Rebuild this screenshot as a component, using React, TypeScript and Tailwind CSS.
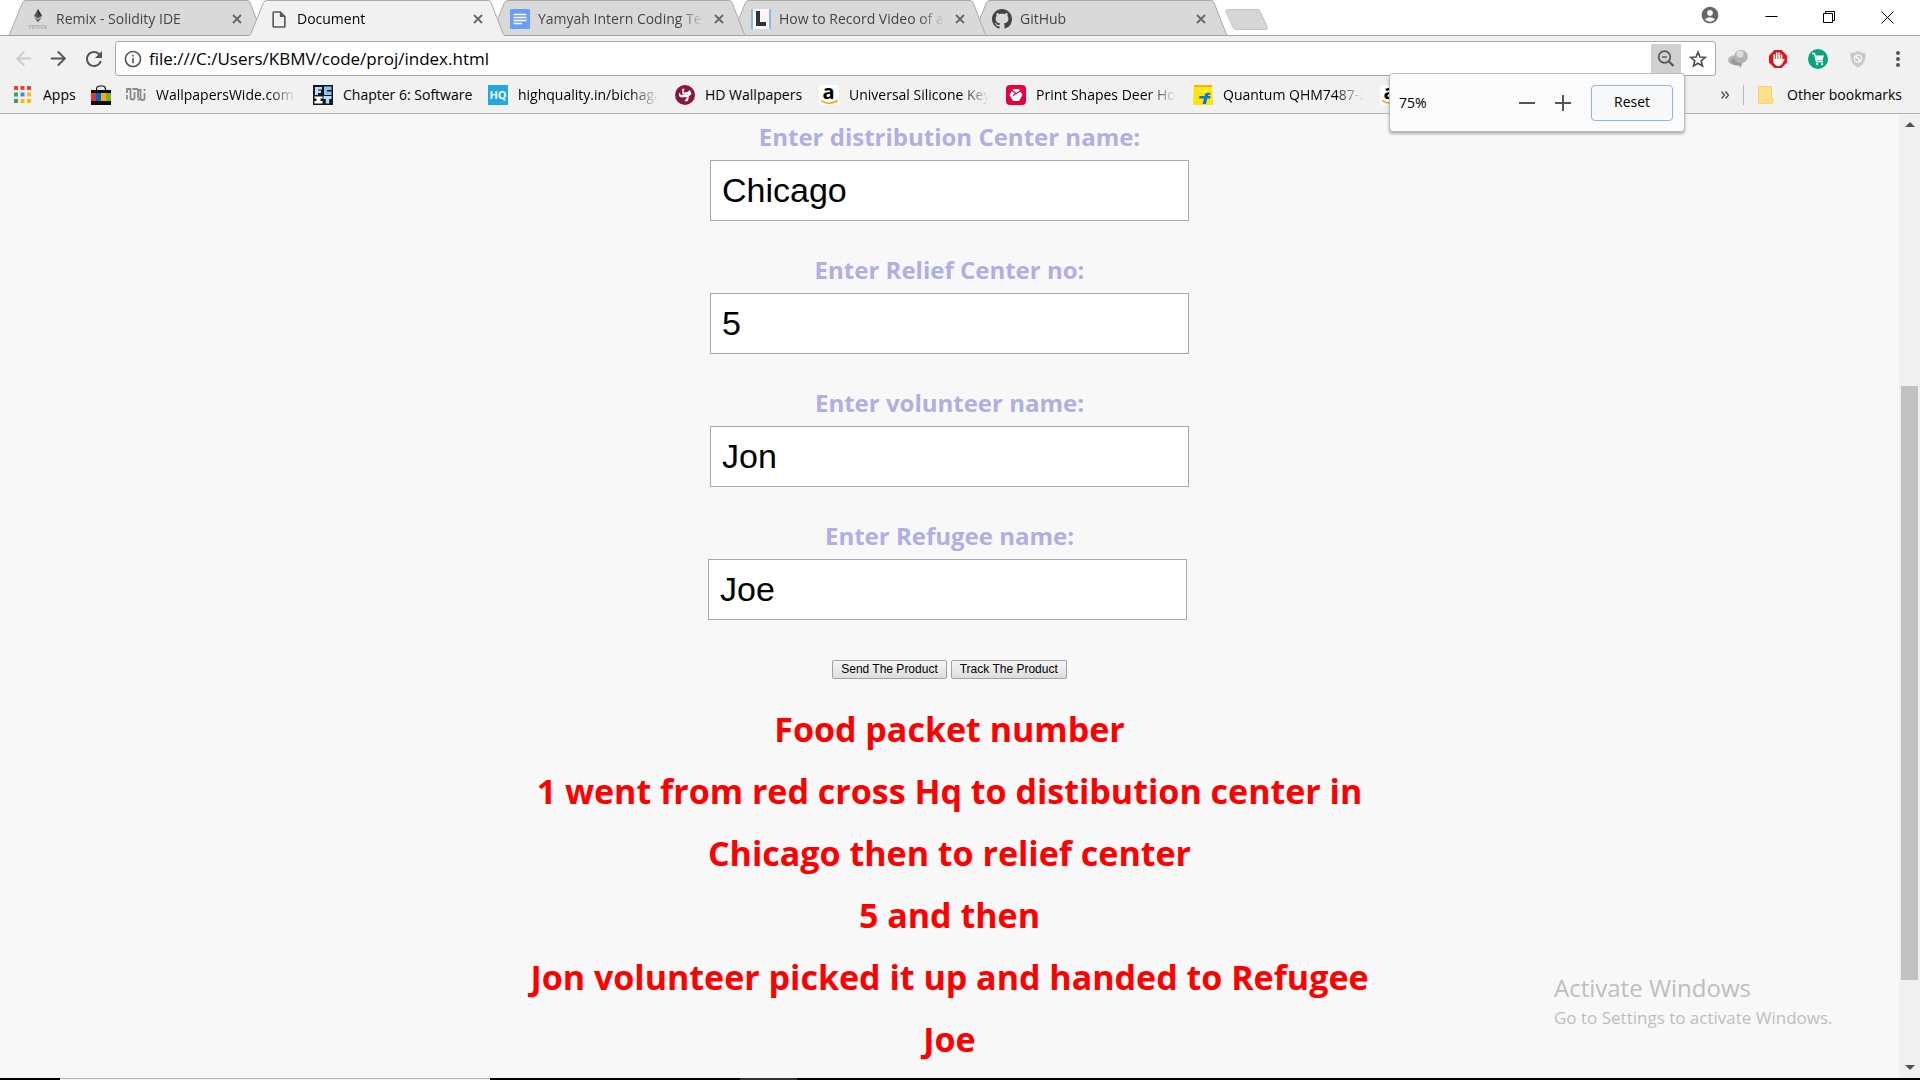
import React, { type ReactNode } from "react";
import {
  MdAccountCircle,
  MdArrowBack,
  MdArrowForward,
  MdInfoOutline,
  MdOutlineInsertDriveFile,
  MdRefresh,
} from "react-icons/md";

/* ---------- favicons ---------- */

const GithubMark = () => (
  <svg viewBox="0 0 16 16" className="size-5" fill="#444">
    <path d="M8 0C3.58 0 0 3.58 0 8c0 3.54 2.29 6.53 5.47 7.59.4.07.55-.17.55-.38 0-.19-.01-.82-.01-1.49-2.01.37-2.53-.49-2.69-.94-.09-.23-.48-.94-.82-1.13-.28-.15-.68-.52-.01-.53.63-.01 1.08.58 1.23.82.72 1.21 1.87.87 2.33.66.07-.52.28-.87.51-1.07-1.78-.2-3.64-.89-3.64-3.95 0-.87.31-1.59.82-2.15-.08-.2-.36-1.02.08-2.12 0 0 .67-.21 2.2.82.64-.18 1.32-.27 2-.27.68 0 1.36.09 2 .27 1.53-1.04 2.2-.82 2.2-.82.44 1.1.16 1.92.08 2.12.51.56.82 1.27.82 2.15 0 3.07-1.87 3.75-3.65 3.95.29.25.54.73.54 1.48 0 1.07-.01 1.93-.01 2.2 0 .21.15.46.55.38A8.013 8.013 0 0016 8c0-4.42-3.58-8-8-8z" />
  </svg>
);

const Remix = () => (
  <svg viewBox="0 0 20 22" className="h-[22px] w-5">
    <path d="M10 1 L14 8 L10 10.500 L6 8Z" fill="#555" />
    <path d="M10 1 L14 8 L10 6.500Z" fill="#333" />
    <path d="M6 9 L10 11.500 L14 9 L10 14.500Z" fill="#666" />
    <text x="10" y="20.500" fontSize="7" textAnchor="middle" fill="#999" fontFamily="Open Sans">
      remix
    </text>
  </svg>
);

const Docs = () => (
  <svg viewBox="0 0 20 20" className="size-5">
    <rect width="20" height="20" rx="1.500" fill="#6b9df8" />
    <path d="M3.500 5.500h13M3.500 8.500h13M3.500 11.500h13M3.500 14.500h8.500" stroke="#fff" strokeWidth="1.400" />
  </svg>
);

const LetterL = () => (
  <svg viewBox="0 0 20 20" className="size-5">
    <rect width="20" height="20" fill="#f8f8f8" />
    <path d="M1 0v20M19 0v20" stroke="#8ab6f2" strokeWidth="2" />
    <path d="M5 2h4v11h6v4H5z" fill="#333" />
  </svg>
);

const AppsGrid = () => (
  <svg viewBox="0 0 17 17" className="size-[17px]">
    {["#ea4335", "#ea4335", "#ea4335", "#34a853", "#4285f4", "#fbbc05", "#34a853", "#fbbc05", "#fbbc05"].map((c, i) => (
      <rect key={i} x={(i % 3) * 6.5} y={Math.floor(i / 3) * 6.5} width="4" height="4" fill={c} />
    ))}
  </svg>
);

const Bag = () => (
  <svg viewBox="0 0 20 20" className="size-5">
    <path d="M5.500 6V4a3 3 0 0 1 3-3h3a3 3 0 0 1 3 3v2" fill="none" stroke="#111" strokeWidth="1.200" />
    <rect y="5" width="20" height="15" fill="#0a0a0a" />
    <rect y="8" width="5" height="8" fill="#e53238" />
    <rect x="5" y="8" width="5" height="8" fill="#0064d2" />
    <rect x="10" y="8" width="5" height="8" fill="#f5af02" />
    <rect x="15" y="8" width="5" height="8" fill="#7cb518" />
  </svg>
);

const Wide = () => (
  <svg viewBox="0 0 20 20" className="size-5" fill="none" stroke="#8a8a8a" strokeWidth="1.800">
    <path d="M1 8V4h3.500v8.500a2 2 0 0 0 4 0V8M1 10v4.500M6.500 4h4a1.500 1.500 0 0 1 1.500 1.500V13M8.500 8.500V7M11.500 14.500h1a2 2 0 0 0 2-2V5h-2M14.500 13.500c0 1 1 1.500 2 1.500s2-.6 2-1.600V8M18.500 4v2" />
  </svg>
);

const Ecit = () => (
  <svg viewBox="0 0 20 20" className="size-5">
    <rect width="20" height="20" fill="#14181f" />
    <path d="M2 2h7v2.500H5v1h3V8H5v2H2z" fill="#b6dcf8" />
    <path d="M11 1.500h7.500V5H14v1.500h4.500V10H11z" fill="#8ec1ee" />
    <path d="M1.500 11.500h8v2h-2v2.500h2v2.500h-8V16h2v-2.500h-2z" fill="#fff" />
    <path d="M10.500 11h8v3h-2.300v4.500h-3.400V14h-2.300z" fill="#b6dcf8" />
  </svg>
);

const Hq = () => (
  <svg viewBox="0 0 20 20" className="size-5">
    <rect width="20" height="20" fill="#22a7e0" />
    <text x="10" y="14" fontSize="11" fontWeight="700" textAnchor="middle" fill="#fff" fontFamily="Open Sans">
      HQ
    </text>
  </svg>
);

const Hd = () => (
  <svg viewBox="0 0 20 20" className="size-5">
    <circle cx="10" cy="10" r="10" fill="#8e1537" />
    <path d="M4 7.500 L6.500 10.300 L11 9 L14 10.500 L13 16 L9.500 16.500 L12 12 L6 12.500 L4 11Z" fill="#fff" />
    <path d="M7 4 L9.500 3.500 L8.500 7.500 L12.500 7 L15 5 L16.500 9 L14.500 11 L12 9.200 L7.500 9.500Z" fill="#fff" />
  </svg>
);

const Amazon = () => (
  <svg viewBox="0 0 20 20" className="size-5">
    <rect width="20" height="20" rx="3" fill="#fff" />
    <text x="9.500" y="13.500" fontSize="20" fontWeight="700" textAnchor="middle" fill="#000" fontFamily="Open Sans">
      a
    </text>
    <path d="M2 15.500c4.500 3.500 10.500 3.500 15 .6M17.800 14.800l-.2 2.700" fill="none" stroke="#f90" strokeWidth="1.500" />
  </svg>
);

const Shapes = () => (
  <svg viewBox="0 0 20 20" className="size-5">
    <rect width="20" height="20" rx="4" fill="#e6003e" />
    <path d="M7 4h6l3.500 6-3.500 6H7l-3.500-6z" fill="#fff" />
    <path d="M5 4.500 L10 8.500 L15.500 5.500 M10 8.500 L7 10.500" fill="none" stroke="#e6003e" strokeWidth="1.200" />
  </svg>
);

const Flipkart = () => (
  <svg viewBox="0 0 20 20" className="size-5">
    <path d="M1 0h18l1 20H0z" fill="#fde50a" />
    <path d="M1 0h18v2H1z" fill="#e9b70c" />
    <path d="M6 3c0 5 8 5 8 0" fill="none" stroke="#fff59a" strokeWidth="1.200" />
    <path d="M17.500 8c-4-1-5.500 0-6 3H6.500l-.5 2.500h5L9.500 19h3.500l1.300-5.500H17l.5-2.500h-2.600c.3-1.200 1-1.400 2.500-1z" fill="#1174dc" />
  </svg>
);

/* ---------- extension icons ---------- */

const Balloons = () => (
  <svg viewBox="0 0 20 20" className="size-5">
    <path d="M9 15l5 0-1 4z" fill="#aaa" />
    <ellipse cx="6" cy="11" rx="6" ry="4.500" fill="#b5b5b5" />
    <ellipse cx="9" cy="12.500" rx="6" ry="4" fill="#999" />
    <circle cx="13" cy="7.500" r="6.800" fill="#b4b4b4" />
    <circle cx="12" cy="5" r="3.500" fill="#dedede" />
  </svg>
);

const StopHand = () => (
  <svg viewBox="0 0 20 20" className="size-5">
    <path d="M6.500 1h7L19 6.500v7L13.500 19h-7L1 13.500v-7z" fill="#e2131a" />
    <path d="M6.300 6v5M8.700 4V11M11.200 4v7M13.500 6v6" stroke="#fff" strokeWidth="1.700" strokeLinecap="round" />
    <path d="M5.500 10h8.900v1l1.500-1.500.8.800-3 5.200-2 1.500H8.500L5.500 14z" fill="#fff" />
  </svg>
);

const CartBadge = () => (
  <svg viewBox="0 0 20 20" className="size-5">
    <circle cx="10" cy="10" r="10" fill="#08a57c" />
    <path d="M4 4.500h2.500l2 8h6.500" fill="none" stroke="#fff" strokeWidth="1.300" />
    <path d="M7 6.500h9l-1.500 4.800H8.200z" fill="#fff" />
    <circle cx="9" cy="15" r="1.200" fill="#fff" />
    <circle cx="14" cy="15" r="1.200" fill="#fff" />
  </svg>
);

const Shield = () => (
  <svg viewBox="0 0 20 20" className="size-5">
    <path d="M10 2c2.500 1.500 4.500 2 7.500 2 0 7-1 11-7.500 14.500C3.500 15 2.500 11 2.500 4c3 0 5-.5 7.500-2z" fill="#c9c9c9" stroke="#dcdcdc" />
    <circle cx="10" cy="9.500" r="3.600" fill="none" stroke="#fff" strokeWidth="1.200" />
    <path d="M7.500 7l5 5" stroke="#fff" strokeWidth="1.200" />
  </svg>
);

const Cross = () => (
  <svg viewBox="0 0 10 10" className="size-2.5">
    <path d="M1 1l8 8M9 1l-8 8" stroke="currentColor" strokeWidth="1.800" />
  </svg>
);

const Magnifier = () => (
  <svg viewBox="0 0 18 18" className="size-[18px]" fill="none" stroke="#555">
    <circle cx="7.500" cy="7" r="5.800" strokeWidth="1.700" />
    <path d="M5 7h5" strokeWidth="1.400" />
    <path d="M11.500 11l5 5" strokeWidth="2.200" />
  </svg>
);

const Star = () => (
  <svg viewBox="0 0 18 18" className="size-[18px]" fill="none" stroke="#505050" strokeWidth="1.700">
    <path d="M9 2.200l2 4.800 5.200.4-4 3.400 1.300 5.100L9 13.200l-4.500 2.700 1.300-5.100-4-3.400L7 7z" />
  </svg>
);

/* ---------- tab strip ---------- */

type TabProps = { title: string; icon: ReactNode; active?: boolean; layer: string };

const Tab = ({ title, icon, active, layer }: TabProps) => (
  <div className={`relative -mr-[15px] flex h-9 w-64 shrink-0 items-center ${layer}`}>
    <svg viewBox="0 0 256 36" preserveAspectRatio="none" className="absolute inset-0 size-full" aria-hidden="true">
      <path
        d="M0 35.500 Q1.500 35 2 33.500 L14.500 2.500 Q15.500 .5 18 .5 L239 .5 Q241 .5 242 2.500 L254 33.500 Q254.500 35 256 35.500 V36 H0Z"
        fill={active ? "#f1f1f1" : "#d9d9d9"}
      />
      <path
        d="M0 35.500 Q1.500 35 2 33.500 L14.500 2.500 Q15.500 .5 18 .5 L239 .5 Q241 .5 242 2.500 L254 33.500 Q254.500 35 256 35.500"
        fill="none"
        stroke="#a9a9a9"
      />
      {!active && <path d="M0 35.500H256" stroke="#a3a3a3" />}
    </svg>
    <button
      role="tab"
      aria-selected={!!active}
      className={`relative ml-5 flex h-7 flex-1 items-center gap-2 pt-0.5 text-left ${active ? "text-black" : "text-[#444]"}`}
    >
      <span className="flex w-5 justify-center">{icon}</span>
      <span className="w-[166px] overflow-hidden text-sm whitespace-nowrap [mask-image:linear-gradient(to_right,#000_140px,transparent_166px)]">
        {title}
      </span>
    </button>
    <button aria-label={`Close ${title}`} className="relative mt-0.5 mr-[22px] text-[#666]">
      <Cross />
    </button>
  </div>
);

const TabStrip = () => (
  <header className="flex h-9 justify-between border-b border-[#a9a9a9] bg-white">
    <div role="tablist" className="flex h-9 pl-2">
      <Tab title="Remix - Solidity IDE" icon={<Remix />} layer="z-0" />
      <Tab title="Document" icon={<MdOutlineInsertDriveFile className="size-[21px] text-[#5a5a5a]" />} active layer="z-30" />
      <Tab title="Yamyah Intern Coding Test" icon={<Docs />} layer="z-20" />
      <Tab title="How to Record Video of a Web" icon={<LetterL />} layer="z-10" />
      <Tab title="GitHub" icon={<GithubMark />} layer="z-0" />
      <button aria-label="New tab" className="mt-2 ml-3 h-6">
        <svg viewBox="0 0 44 24" className="h-6 w-11">
          <path
            d="M2.500 1.500 H32 Q34 1.500 35 3 L42.500 19.500 Q43 21.500 41 21.500 H11 Q9 21.500 8 19.500 L1 3.500 Q.5 1.500 2.500 1.500Z"
            fill="#d6d6d6"
            stroke="#c4c4c4"
          />
        </svg>
      </button>
    </div>
    <div className="flex items-start">
      <button aria-label="Profile" className="mt-[5px] mr-[45px] text-[#666]">
        <MdAccountCircle className="size-5" />
      </button>
      <div className="mt-[11px] mr-[26px] flex gap-[45px]">
        <button aria-label="Minimize">
          <svg viewBox="0 0 13 13" className="size-[13px]">
            <path d="M.5 5.500h12" stroke="#000" />
          </svg>
        </button>
        <button aria-label="Restore">
          <svg viewBox="0 0 13 13" className="size-[13px]" fill="none" stroke="#000">
            <path d="M.5 2.500h9v9h-9zM2.500 2.500v-2h9v9h-2" />
          </svg>
        </button>
        <button aria-label="Close">
          <svg viewBox="0 0 13 13" className="size-[13px]">
            <path d="M.5 .5l12 12M12.500 .5l-12 12" stroke="#000" />
          </svg>
        </button>
      </div>
    </div>
  </header>
);

/* ---------- toolbar ---------- */

const ZoomBubble = () => (
  <div
    role="dialog"
    aria-label="Zoom"
    className="absolute top-full -right-1 z-40 flex h-[59px] w-[296px] items-center rounded-sm border border-[#bdbdbd] bg-[#fbfbfb] pr-[11px] pl-[9px] text-sm text-black shadow-[0_2px_3px_rgba(0,0,0,0.3)]"
  >
    <span className="flex-1">75%</span>
    <button aria-label="Zoom out" className="mr-5">
      <svg viewBox="0 0 16 16" className="size-4">
        <path d="M0 8h16" stroke="#555" strokeWidth="2" />
      </svg>
    </button>
    <button aria-label="Zoom in" className="mr-5">
      <svg viewBox="0 0 16 16" className="size-4">
        <path d="M0 8h16M8 0v16" stroke="#555" strokeWidth="2" />
      </svg>
    </button>
    <button className="h-9 w-[82px] rounded-sm border border-[#8db2f5] bg-[#f8f8f8] pb-0.5">Reset</button>
  </div>
);

const Toolbar = () => (
  <div className="flex h-10 items-center pt-[5px]">
    <nav className="flex w-[115px] items-center gap-3 pl-3 text-[#555]">
      <button aria-label="Back" className="text-[#ccc]">
        <MdArrowBack className="size-[23px]" />
      </button>
      <button aria-label="Forward">
        <MdArrowForward className="size-[23px]" />
      </button>
      <button aria-label="Reload">
        <MdRefresh className="size-6" />
      </button>
    </nav>
    <div className="flex h-[35px] flex-1 items-center rounded-[3px] border border-[#a9a9a9] bg-white">
      <MdInfoOutline className="ml-[7px] size-5 text-[#555]" />
      <input
        aria-label="Address"
        defaultValue="file:///C:/Users/KBMV/code/proj/index.html"
        className="mx-1.5 min-w-0 flex-1 bg-transparent text-[17px] text-black outline-none"
      />
      <div className="relative">
        <button aria-label="Zoom level" className="flex h-[29px] w-[30px] items-center justify-center bg-[#d0d0d0]">
          <Magnifier />
        </button>
        <ZoomBubble />
      </div>
      <button aria-label="Bookmark this page" className="mr-2 ml-2">
        <Star />
      </button>
    </div>
    <div className="flex items-center gap-5 pr-5 pl-3">
      <button aria-label="Balloons">
        <Balloons />
      </button>
      <button aria-label="Ad blocker">
        <StopHand />
      </button>
      <button aria-label="Shopping">
        <CartBadge />
      </button>
      <button aria-label="Shield">
        <Shield />
      </button>
      <button aria-label="Menu" className="ml-2">
        <svg viewBox="0 0 4 18" className="h-[18px] w-1" fill="#555">
          <circle cx="2" cy="3" r="2" />
          <circle cx="2" cy="9" r="2" />
          <circle cx="2" cy="15" r="2" />
        </svg>
      </button>
    </div>
  </div>
);

/* ---------- bookmarks ---------- */

const fade = "w-[142px] [mask-image:linear-gradient(to_right,#000_112px,transparent_140px)]";

const bookmarks: { label: string; icon: ReactNode; width: string; hideLabel?: boolean }[] = [
  { label: "Shop", icon: <Bag />, width: "", hideLabel: true },
  { label: "WallpapersWide.com", icon: <Wide />, width: fade },
  { label: "Chapter 6: Software", icon: <Ecit />, width: "w-[130px]" },
  { label: "highquality.in/bichagadu", icon: <Hq />, width: fade },
  { label: "HD Wallpapers", icon: <Hd />, width: "w-[99px]" },
  { label: "Universal Silicone Keyboard", icon: <Amazon />, width: fade },
  { label: "Print Shapes Deer Home", icon: <Shapes />, width: fade },
  { label: "Quantum QHM7487-2W", icon: <Flipkart />, width: fade },
  { label: "Amazon", icon: <Amazon />, width: "", hideLabel: true },
];

const BookmarkBar = () => (
  <nav aria-label="Bookmarks" className="flex h-[38px] items-center justify-between border-b border-[#b5b5b5] pr-[18px] pl-3.5 text-sm text-black">
    <div className="flex items-center gap-[15px]">
      <a href="#apps" className="flex items-center gap-3">
        <AppsGrid />
        <span className="w-[33px]">Apps</span>
      </a>
      {bookmarks.map((b, i) => (
        <a key={i} href="#bookmark" aria-label={b.label} className="flex items-center gap-2.5">
          {b.icon}
          {!b.hideLabel && <span className={`overflow-hidden whitespace-nowrap ${b.width}`}>{b.label}</span>}
        </a>
      ))}
    </div>
    <div className="flex items-center">
      <button aria-label="More bookmarks" className="mr-3.5 text-[#555]">
        <svg viewBox="0 0 8 8" className="size-2" fill="none" stroke="currentColor" strokeWidth="1.500">
          <path d="M.5 .5L3.500 4L.5 7.500M4.500 .5L7.500 4L4.500 7.500" />
        </svg>
      </button>
      <span className="mr-3.5 h-5 w-px bg-[#b8b8b8]" />
      <a href="#other" className="flex items-center gap-[13px]">
        <svg viewBox="0 0 16 18" className="h-[18px] w-4">
          <path d="M1 0h12a1 1 0 0 1 1 1v10a1.500 1.500 0 0 1 1.500 1.500v4A1.500 1.500 0 0 1 14 18H1a1 1 0 0 1-1-1V1a1 1 0 0 1 1-1z" fill="#fee08a" />
          <path d="M.5 .5h13v11.500l1.500 1v3.500l-1 1H.5z" fill="none" stroke="#f5d272" />
        </svg>
        <span>Other bookmarks</span>
      </a>
    </div>
  </nav>
);

/* ---------- page ---------- */

const fields = [
  { id: "center", label: "Enter distribution Center name:", value: "Chicago", shift: "" },
  { id: "relief", label: "Enter Relief Center no:", value: "5", shift: "" },
  { id: "volunteer", label: "Enter volunteer name:", value: "Jon", shift: "" },
  { id: "refugee", label: "Enter Refugee name:", value: "Joe", shift: "mr-1" },
];

const message = [
  "Food packet number",
  "1 went from red cross Hq to distibution center in",
  "Chicago then to relief center",
  "5 and then",
  "Jon volunteer picked it up and handed to Refugee",
  "Joe",
];

const formButton =
  "rounded-[2px] border border-[#a0a0a0] bg-linear-to-b from-[#f6f6f6] to-[#dddddd] px-2 text-xs leading-[17px] text-black";

const Page = () => (
  <main className="flex-1 overflow-hidden bg-[#f8f8f8] text-center">
    <form className="flex flex-col items-center gap-8 pt-1.5" onSubmit={(e) => e.preventDefault()}>
      {fields.map((f) => (
        <div key={f.id} className="flex flex-col items-center">
          <label htmlFor={f.id} className="h-10 text-2xl leading-[33px] font-bold text-[#afafe4]">
            {f.label}
          </label>
          <input
            id={f.id}
            defaultValue={f.value}
            className={`h-[61px] w-[479px] border border-[#a9a9a9] bg-white px-[11px] font-['Liberation_Sans',Arial,sans-serif] text-[34px] text-black ${f.shift}`}
          />
        </div>
      ))}
      <div className="mt-2 flex gap-1 font-['Liberation_Sans',Arial,sans-serif]">
        <button className={formButton}>Send The Product</button>
        <button className={formButton}>Track The Product</button>
      </div>
    </form>
    <h1 className="mt-[19px] text-[34px] leading-[62px] font-bold text-[#ff0000]">
      {message.map((line) => (
        <span key={line} className="block">
          {line}
        </span>
      ))}
    </h1>
  </main>
);

const Scrollbar = () => (
  <div className="flex w-[21px] flex-col items-center bg-[#f0f0f0]">
    <button aria-label="Scroll up" className="flex h-[21px] items-center">
      <svg viewBox="0 0 10 5" className="h-[5px] w-2.5">
        <path d="M0 5L5 0L10 5z" fill="#505050" />
      </svg>
    </button>
    <div className="flex w-full flex-1 flex-col items-center">
      <div className="grow-[251]" />
      <div className="w-[17px] grow-[594] bg-[#c1c1c1]" />
      <div className="grow-[77]" />
    </div>
    <button aria-label="Scroll down" className="flex h-[21px] items-center">
      <svg viewBox="0 0 10 5" className="h-[5px] w-2.5">
        <path d="M0 0L5 5L10 0z" fill="#505050" />
      </svg>
    </button>
  </div>
);

export default function App() {
  return (
    <div className="relative flex h-screen flex-col overflow-hidden bg-[#f1f1f1] font-['Open_Sans','Noto_Sans',sans-serif]">
      <TabStrip />
      <Toolbar />
      <BookmarkBar />
      <div className="flex min-h-0 flex-1">
        <Page />
        <Scrollbar />
      </div>
      <footer className="flex h-0.5 bg-black">
        <span className="ml-[60px] w-[430px] border-t border-[#b8b8b8] bg-[#f1f1f1]" />
        <span className="ml-[250px] w-[57px] bg-[#333]" />
      </footer>
      <aside className="pointer-events-none absolute right-20 bottom-12 w-[286px] whitespace-nowrap text-[#bebebe]">
        <p className="text-2xl leading-8">Activate Windows</p>
        <p className="text-[17px] leading-7">Go to Settings to activate Windows.</p>
      </aside>
    </div>
  );
}
